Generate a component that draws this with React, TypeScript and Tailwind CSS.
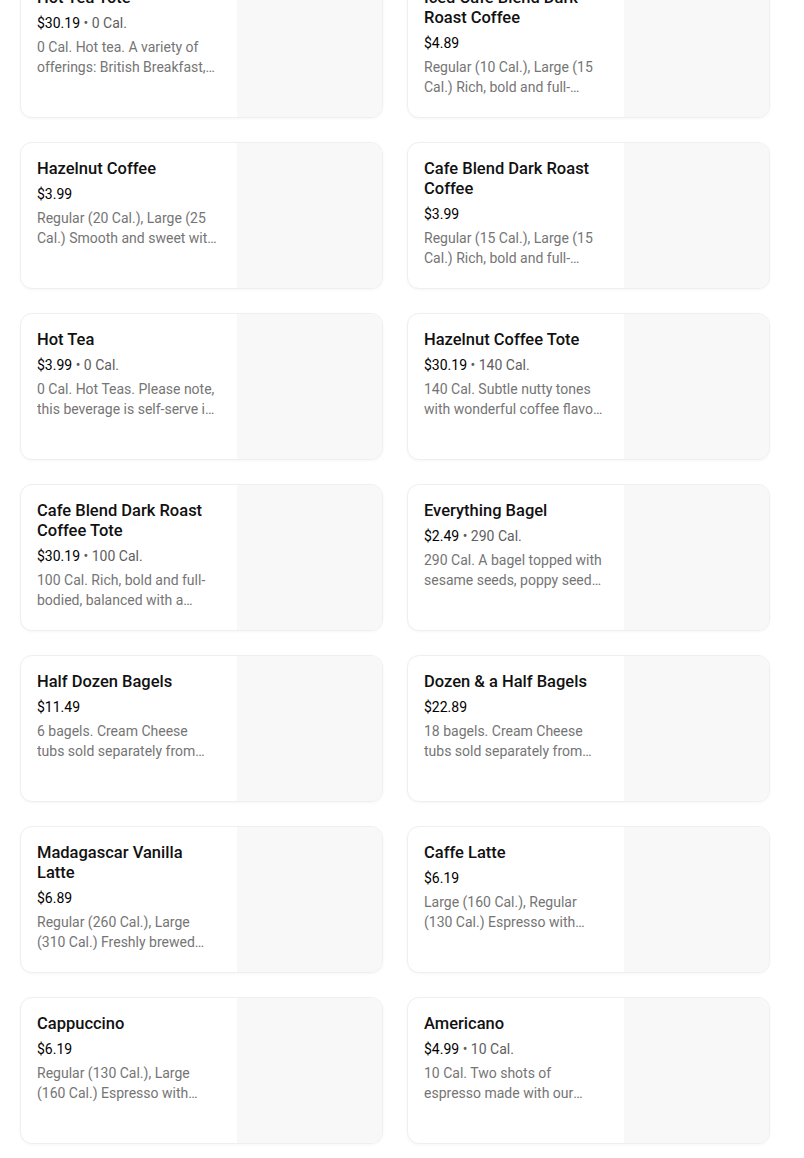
type MenuItem = {
  name: string;
  price: string;
  cal?: string;
  desc: string;
};

const items: MenuItem[] = [
  { name: 'Hot Tea Tote', price: '$30.19', cal: '0 Cal.', desc: '0 Cal. Hot tea. A variety of offerings: British Breakfast, Green Tea and more.' },
  { name: 'Iced Cafe Blend Dark Roast Coffee', price: '$4.89', desc: 'Regular (10 Cal.), Large (15 Cal.) Rich, bold and full-bodied iced coffee.' },
  { name: 'Hazelnut Coffee', price: '$3.99', desc: 'Regular (20 Cal.), Large (25 Cal.) Smooth and sweet with nutty notes.' },
  { name: 'Cafe Blend Dark Roast Coffee', price: '$3.99', desc: 'Regular (15 Cal.), Large (15 Cal.) Rich, bold and full-bodied coffee.' },
  { name: 'Hot Tea', price: '$3.99', cal: '0 Cal.', desc: '0 Cal. Hot Teas. Please note, this beverage is self-serve in the cafe.' },
  { name: 'Hazelnut Coffee Tote', price: '$30.19', cal: '140 Cal.', desc: '140 Cal. Subtle nutty tones with wonderful coffee flavor and aroma.' },
  { name: 'Cafe Blend Dark Roast Coffee Tote', price: '$30.19', cal: '100 Cal.', desc: '100 Cal. Rich, bold and full-bodied, balanced with a smooth finish.' },
  { name: 'Everything Bagel', price: '$2.49', cal: '290 Cal.', desc: '290 Cal. A bagel topped with sesame seeds, poppy seeds, garlic and onion.' },
  { name: 'Half Dozen Bagels', price: '$11.49', desc: '6 bagels. Cream Cheese tubs sold separately from the bagels.' },
  { name: 'Dozen & a Half Bagels', price: '$22.89', desc: '18 bagels. Cream Cheese tubs sold separately from the bagels.' },
  { name: 'Madagascar Vanilla Latte', price: '$6.89', desc: 'Regular (260 Cal.), Large (310 Cal.) Freshly brewed espresso with vanilla.' },
  { name: 'Caffe Latte', price: '$6.19', desc: 'Large (160 Cal.), Regular (130 Cal.) Espresso with steamed milk.' },
  { name: 'Cappuccino', price: '$6.19', desc: 'Regular (130 Cal.), Large (160 Cal.) Espresso with foamed milk.' },
  { name: 'Americano', price: '$4.99', cal: '10 Cal.', desc: '10 Cal. Two shots of espresso made with our signature blend.' },
];

function ItemCard({ item }: { item: MenuItem }) {
  return (
    <div className="flex h-[147px] overflow-hidden rounded-xl border border-[#efefef] bg-white shadow-[0_1px_3px_rgba(0,0,0,0.04)]">
      <div className="flex min-w-0 flex-1 flex-col pl-4 pr-5 pt-4">
        <div className="text-[16.5px] font-medium leading-5 text-[#111]">{item.name}</div>
        <div className="mt-[5px] text-[14px] leading-5 text-black">
          {item.price}
          {item.cal ? <span className="text-[#5e5e5e]"> • {item.cal}</span> : null}
        </div>
        <div className="mt-1 line-clamp-2 text-[14px] leading-5 text-[#757575]">{item.desc}</div>
      </div>
      <div className="w-[145px] shrink-0 bg-[#f8f8f8]" />
    </div>
  );
}

export default function App() {
  return (
    <div className="h-[1158px] overflow-hidden bg-white pl-5 pr-[34px]" style={{ fontFamily: 'Roboto, "Noto Sans", sans-serif' }}>
      <div className="-mt-[29px] grid grid-cols-2 gap-x-6 gap-y-6">
        {items.map((item) => (
          <ItemCard key={item.name} item={item} />
        ))}
      </div>
    </div>
  );
}
